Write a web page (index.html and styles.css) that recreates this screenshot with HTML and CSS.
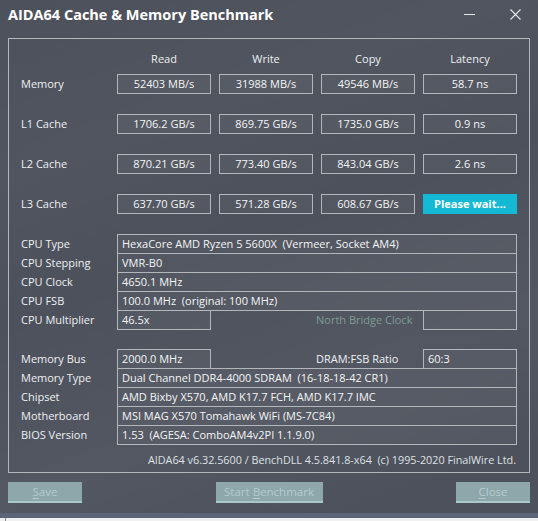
FILE: index.html
```
<!DOCTYPE html>
<html>
<head>
<meta charset="utf-8">
<link rel="stylesheet" href="styles.css">
</head>
<body>
<div class="window">
  <div class="titlebar">
    <div class="title">AIDA64 Cache &amp; Memory Benchmark</div>
    <div class="controls">
      <span class="min"></span>
      <svg class="close" width="11" height="11" viewBox="0 0 11 11"><path d="M0.5 0.5 L10.5 10.5 M10.5 0.5 L0.5 10.5" stroke="#e6e8ec" stroke-width="1.1" fill="none"/></svg>
    </div>
  </div>

  <div class="group">
    <div class="bench bench-head">
      <div></div>
      <div class="hdr">Read</div>
      <div class="hdr">Write</div>
      <div class="hdr">Copy</div>
      <div class="hdr">Latency</div>
    </div>
    <div class="bench bench-body">
      <div class="lbl">Memory</div>
      <div class="val">52403 MB/s</div>
      <div class="val">31988 MB/s</div>
      <div class="val">49546 MB/s</div>
      <div class="val">58.7 ns</div>

      <div class="lbl">L1 Cache</div>
      <div class="val">1706.2 GB/s</div>
      <div class="val">869.75 GB/s</div>
      <div class="val">1735.0 GB/s</div>
      <div class="val">0.9 ns</div>

      <div class="lbl">L2 Cache</div>
      <div class="val">870.21 GB/s</div>
      <div class="val">773.40 GB/s</div>
      <div class="val">843.04 GB/s</div>
      <div class="val">2.6 ns</div>

      <div class="lbl">L3 Cache</div>
      <div class="val">637.70 GB/s</div>
      <div class="val">571.28 GB/s</div>
      <div class="val">608.67 GB/s</div>
      <div class="val wait">Please wait...</div>
    </div>

    <div class="info cpu">
      <div class="ilbl">CPU Type</div>
      <div class="cell full">HexaCore AMD Ryzen 5 5600X&nbsp; (Vermeer, Socket AM4)</div>
      <div class="ilbl">CPU Stepping</div>
      <div class="cell full">VMR-B0</div>
      <div class="ilbl">CPU Clock</div>
      <div class="cell full">4650.1 MHz</div>
      <div class="ilbl">CPU FSB</div>
      <div class="cell full">100.0 MHz&nbsp; (original: 100 MHz)</div>
      <div class="ilbl">CPU Multiplier</div>
      <div class="cell last">46.5x</div>
      <div class="mid topline nb">North Bridge Clock</div>
      <div class="cell last"></div>
    </div>

    <div class="info mem">
      <div class="ilbl">Memory Bus</div>
      <div class="cell">2000.0 MHz</div>
      <div class="mid">DRAM:FSB Ratio</div>
      <div class="cell">60:3</div>
      <div class="ilbl">Memory Type</div>
      <div class="cell full">Dual Channel DDR4-4000 SDRAM&nbsp; (16-18-18-42 CR1)</div>
      <div class="ilbl">Chipset</div>
      <div class="cell full">AMD Bixby X570, AMD K17.7 FCH, AMD K17.7 IMC</div>
      <div class="ilbl">Motherboard</div>
      <div class="cell full">MSI MAG X570 Tomahawk WiFi (MS-7C84)</div>
      <div class="ilbl">BIOS Version</div>
      <div class="cell full last">1.53&nbsp; (AGESA: ComboAM4v2PI 1.1.9.0)</div>
    </div>

    <div class="footer">AIDA64 v6.32.5600 / BenchDLL 4.5.841.8-x64&nbsp; (c) 1995-2020 FinalWire Ltd.</div>
  </div>

  <div class="buttons">
    <div class="btn btn-small"><u>S</u>ave</div>
    <div class="btn btn-wide">Start <u>B</u>enchmark</div>
    <div class="btn btn-small"><u>C</u>lose</div>
  </div>
  <div class="band"></div>
  <div class="below"><span class="tick"></span></div>
</div>
</body>
</html>
```
FILE: styles.css
```
* { box-sizing: border-box; }
html, body { margin: 0; padding: 0; }
body {
  width: 538px;
  height: 521px;
  overflow: hidden;
  font-family: "Open Sans", "Noto Sans", sans-serif;
  font-size: 11px;
  color: #eef0f2;
}
.window {
  width: 538px;
  height: 521px;
  display: flex;
  flex-direction: column;
  background-color: #4c515c;
  background-image:
    linear-gradient(160deg, rgba(255,255,255,0) 0%, rgba(255,255,255,0.025) 25%, rgba(255,255,255,0) 45%, rgba(255,255,255,0.035) 70%, rgba(255,255,255,0) 90%);
}
.titlebar {
  height: 38px;
  flex: none;
  display: flex;
  align-items: flex-start;
}
.title {
  padding: 5px 0 0 8px;
  font-size: 14.5px;
  line-height: 20px;
  font-weight: 700;
  color: #ffffff;
}
.controls {
  margin-left: auto;
  margin-right: 17px;
  padding-top: 9px;
  display: flex;
  align-items: flex-start;
  gap: 35px;
}
.min {
  display: block;
  width: 11px;
  height: 1px;
  margin-top: 5px;
  background: #e6e8ec;
}
.close { display: block; }

.group {
  margin: 0 8px;
  height: 435px;
  flex: none;
  border: 1px solid #b3b6bb;
  padding: 12px 12px 0 12px;
  display: flex;
  flex-direction: column;
}
.bench {
  display: grid;
  grid-template-columns: 88px repeat(4, 94px);
  column-gap: 8px;
}
.bench-head {
  height: 16px;
  margin-bottom: 7px;
}
.hdr {
  text-align: center;
  line-height: 16px;
}
.bench-body {
  grid-auto-rows: 20px;
  row-gap: 20px;
}
.lbl {
  line-height: 20px;
}
.val {
  border: 1px solid #b3b6bb;
  background: rgba(255,255,255,0.035);
  text-align: center;
  line-height: 18px;
  color: #f4f5f7;
}
.val.wait {
  background: #14b9d6;
  border-color: #14b9d6;
  font-weight: 700;
  color: #ffffff;
}

.info {
  display: grid;
  grid-template-columns: 96px 94px 1fr 94px;
  grid-auto-rows: 19px;
}
.info.cpu { margin-top: 20px; }
.info.mem { margin-top: 20px; }
.ilbl {
  line-height: 19px;
}
.cell {
  border: 1px solid #b3b6bb;
  border-bottom: none;
  padding-left: 4px;
  line-height: 18px;
  white-space: nowrap;
  background: rgba(255,255,255,0.035);
  color: #f4f5f7;
}
.cell.full { grid-column: 2 / 5; }
.cell.last { border-bottom: 1px solid #b3b6bb; height: 20px; }
.mid {
  padding-left: 105px;
  line-height: 19px;
  white-space: nowrap;
}
.mid.topline { border-top: 1px solid #b3b6bb; line-height: 18px; }
.mid.nb { color: #7f9c95; }

.footer {
  margin-top: auto;
  margin-bottom: 4px;
  text-align: right;
  line-height: 16px;
  padding-right: 1px;
  color: #dfe1e4;
  font-size: 10.8px;
}

.buttons {
  margin: 9px 8px 0 8px;
  height: 21px;
  flex: none;
  display: flex;
  justify-content: space-between;
}
.btn {
  height: 21px;
  background: #8ea7ab;
  border-bottom: 2px solid #a9c8c8;
  color: #b6cbce;
  text-align: center;
  line-height: 19px;
  font-size: 11.5px;
}
.btn u { text-underline-offset: 2px; }
.btn-small { width: 74px; }
.btn-wide { width: 107px; }
.band {
  margin-top: 10px;
  height: 5px;
  flex: none;
  background: #5b6577;
}
.below {
  flex: 1;
  background: #f0f0f0;
  position: relative;
}
.tick {
  position: absolute;
  left: 5px;
  top: 0;
  width: 1px;
  height: 3px;
  background: #8a8a8a;
}
```
